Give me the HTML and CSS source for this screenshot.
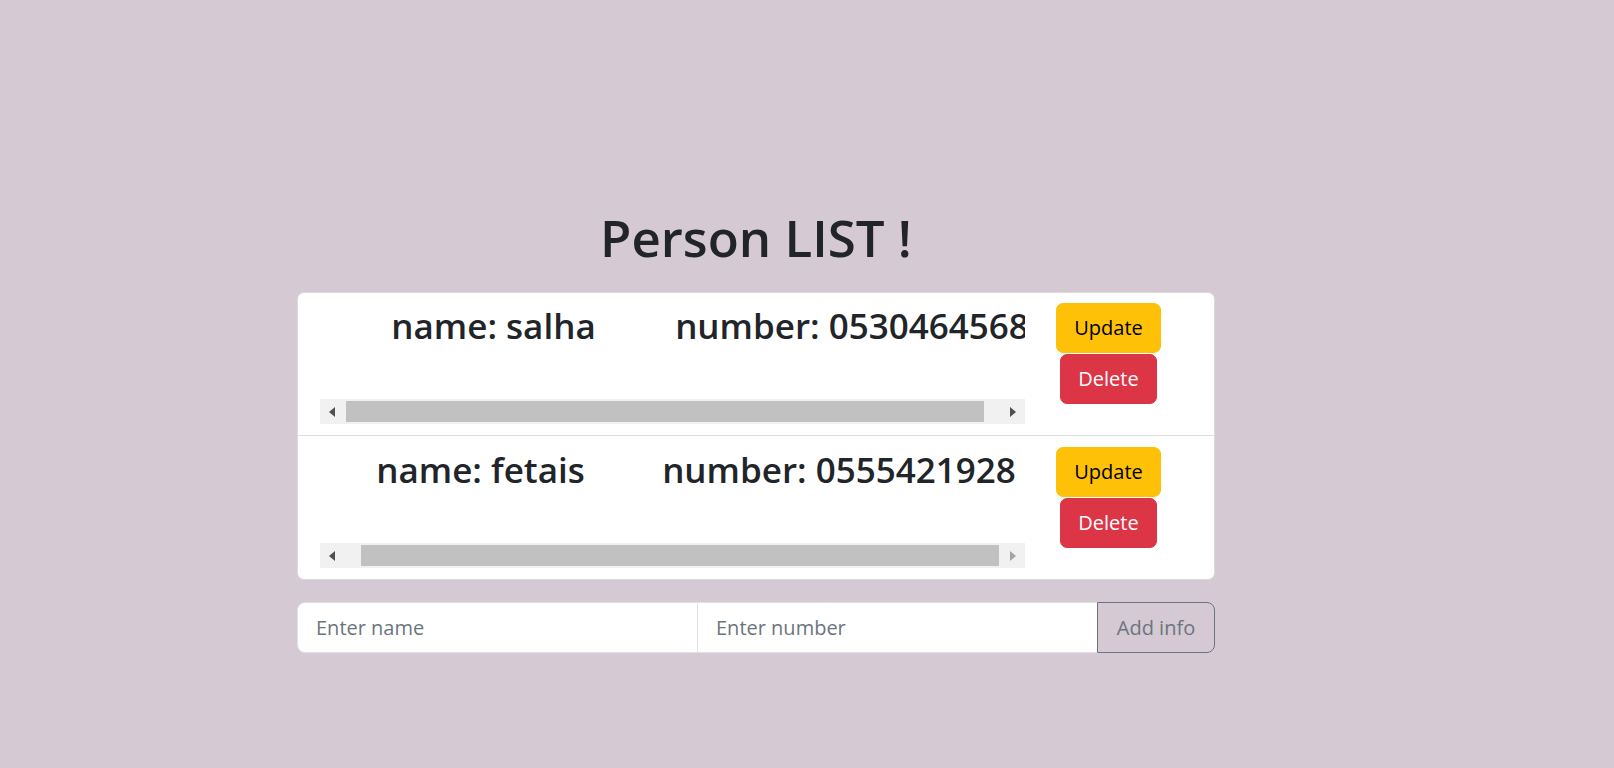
FILE: index.html
```html
<!DOCTYPE html>
<html lang="en">
<head>
<meta charset="utf-8">
<title>Person LIST</title>
<link rel="stylesheet" href="styles.css">
</head>
<body>
<main class="page">
  <h1 class="title">Person LIST !</h1>
  <ul class="list">
    <li class="item">
      <div class="scroller">
        <div class="viewport">
          <div class="content">
            <span class="cell cell-name">name: salha</span>
            <span class="cell cell-number">number: 0530464568</span>
          </div>
        </div>
        <div class="hbar">
          <span class="arrow-btn"><span class="arrow arrow-left"></span></span>
          <span class="track"><span class="thumb"></span></span>
          <span class="arrow-btn"><span class="arrow arrow-right"></span></span>
        </div>
      </div>
      <div class="actions">
        <button class="btn btn-update">Update</button>
        <button class="btn btn-delete">Delete</button>
      </div>
    </li>
    <li class="item">
      <div class="scroller">
        <div class="viewport">
          <div class="content content-end">
            <span class="cell cell-name">name: fetais</span>
            <span class="cell cell-number">number: 0555421928</span>
          </div>
        </div>
        <div class="hbar">
          <span class="arrow-btn"><span class="arrow arrow-left"></span></span>
          <span class="track track-end"><span class="thumb"></span></span>
          <span class="arrow-btn"><span class="arrow arrow-right arrow-off"></span></span>
        </div>
      </div>
      <div class="actions">
        <button class="btn btn-update">Update</button>
        <button class="btn btn-delete">Delete</button>
      </div>
    </li>
  </ul>
  <form class="add-form">
    <input class="field field-name" type="text" placeholder="Enter name">
    <input class="field field-number" type="text" placeholder="Enter number">
    <button class="add-btn" type="button">Add info</button>
  </form>
</main>
</body>
</html>
```

FILE: styles.css
```css
* {
  box-sizing: border-box;
}

html, body {
  margin: 0;
  padding: 0;
}

body {
  background: #d5c9d3;
  font-family: "Open Sans", "Noto Sans", sans-serif;
  color: #212529;
  height: 768px;
  overflow: hidden;
}

.page {
  width: 918px;
  margin-left: 297px;
  padding-top: 207px;
}

.title {
  margin: 0 0 24px;
  font-size: 51px;
  font-weight: 600;
  line-height: 1.2;
  text-align: center;
  color: #212529;
}

.list {
  list-style: none;
  margin: 0;
  padding: 0;
  background: #fff;
  border: 1px solid #dcdcdc;
  border-radius: 7px;
}

.item {
  display: flex;
  align-items: flex-start;
  padding: 10px 22px 11px;
}

.item + .item {
  border-top: 1px solid #dedede;
  padding-top: 11px;
}

.scroller {
  width: 705px;
  flex: 0 0 705px;
  display: flex;
  flex-direction: column;
}

.viewport {
  height: 96px;
  overflow: hidden;
}

.content {
  display: flex;
  width: 724px;
  padding-top: 2px;
  font-size: 35px;
  font-weight: 600;
  line-height: 1.2;
  white-space: nowrap;
}

.content-end {
  margin-left: -13px;
}

.cell {
  display: block;
  text-align: center;
}

.cell-name {
  width: 347px;
}

.cell-number {
  width: 370px;
}

.hbar {
  display: flex;
  height: 25px;
  background: #f1f1f1;
}

.arrow-btn {
  width: 26px;
  flex: 0 0 26px;
  display: flex;
  align-items: center;
  justify-content: center;
}

.arrow {
  width: 0;
  height: 0;
  border-top: 5.5px solid transparent;
  border-bottom: 5.5px solid transparent;
}

.arrow-left {
  border-right: 6px solid #505050;
  margin-right: 2px;
}

.arrow-right {
  border-left: 6px solid #505050;
  margin-left: 2px;
}

.arrow-off {
  border-left-color: #a3a3a3;
}

.track {
  flex: 1;
  display: flex;
  align-items: center;
}

.track-end {
  justify-content: flex-end;
}

.thumb {
  width: 638px;
  height: 21px;
  background: #c1c1c1;
}

.actions {
  flex: 1;
  display: flex;
  flex-direction: column;
  align-items: center;
  gap: 1px;
}

.btn {
  font-family: "Open Sans", "Noto Sans", sans-serif;
  font-size: 20px;
  line-height: 30px;
  padding: 9px 17px;
  border: 1px solid transparent;
  border-radius: 7px;
  cursor: pointer;
}

.btn-update {
  background: #ffc107;
  border-color: #ffc107;
  color: #000;
}

.btn-delete {
  background: #dc3545;
  border-color: #dc3545;
  color: #fff;
}

.add-form {
  display: flex;
  margin-top: 22px;
  height: 51px;
}

.field {
  width: 401px;
  flex: 0 0 401px;
  height: 51px;
  font-family: "Open Sans", "Noto Sans", sans-serif;
  font-size: 20px;
  padding: 0 18px;
  border: 1px solid #dee2e6;
  background: #fff;
  color: #212529;
  outline: none;
}

.field::placeholder {
  color: #6c757d;
}

.field-name {
  border-radius: 8px 0 0 8px;
}

.field-number {
  margin-left: -1px;
  border-radius: 0;
}

.add-btn {
  flex: 1;
  height: 51px;
  margin-left: -1px;
  font-family: "Open Sans", "Noto Sans", sans-serif;
  font-size: 20px;
  color: #6c757d;
  background: transparent;
  border: 1px solid #6c757d;
  border-radius: 0 8px 8px 0;
  padding: 0 18px;
}
```
